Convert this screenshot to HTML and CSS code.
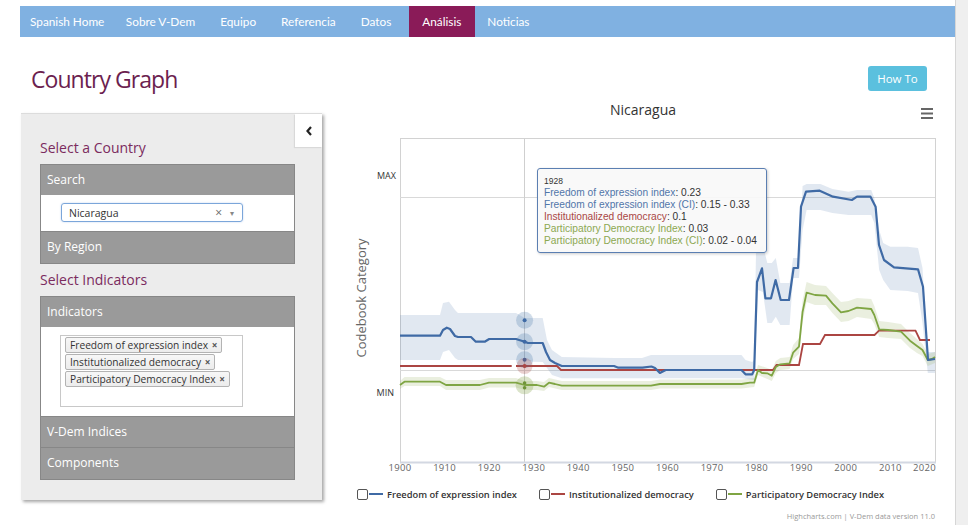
FILE: index.html
```html
<!DOCTYPE html>
<html lang="es">
<head>
<meta charset="utf-8">
<title>Country Graph</title>
<link rel="stylesheet" href="styles.css">
</head>
<body>
<div class="app">
  <div class="main">
    <nav class="topnav">
      <a class="nav-item first">Spanish Home</a>
      <a class="nav-item">Sobre V-Dem</a>
      <a class="nav-item">Equipo</a>
      <a class="nav-item">Referencia</a>
      <a class="nav-item">Datos</a>
      <a class="nav-item active">Análisis</a>
      <a class="nav-item">Noticias</a>
    </nav>
    <header class="title-row">
      <h1 class="page-title">Country Graph</h1>
      <button class="howto">How To</button>
    </header>
    <div class="content">
      <aside class="sidebar">
        <div class="collapse-tab">
          <svg width="8" height="10" viewBox="0 0 8 10"><path d="M6 1 L2.5 5 L6 9" fill="none" stroke="#222" stroke-width="2.2"/></svg>
        </div>
        <h3 class="side-heading">Select a Country</h3>
        <div class="acc">
          <div class="acc-head">Search</div>
          <div class="acc-body country-body">
            <div class="select-box">
              <span class="select-val">Nicaragua</span>
              <span class="select-clear">×</span>
              <span class="select-caret">▾</span>
            </div>
          </div>
          <div class="acc-head">By Region</div>
        </div>
        <h3 class="side-heading second">Select Indicators</h3>
        <div class="acc">
          <div class="acc-head">Indicators</div>
          <div class="acc-body ind-body">
            <div class="multi-box">
              <span class="tag">Freedom of expression index <b>×</b></span>
              <span class="tag">Institutionalized democracy <b>×</b></span>
              <span class="tag">Participatory Democracy Index <b>×</b></span>
            </div>
          </div>
          <div class="acc-head">V-Dem Indices</div>
          <div class="acc-head">Components</div>
        </div>
      </aside>
      <section class="chart">
        <svg class="plot" width="610" height="380" viewBox="340 97 610 380">
          <text class="ctitle" x="643" y="115" text-anchor="middle">Nicaragua</text>
          <g stroke="#666" stroke-width="2">
            <line x1="921" y1="109" x2="933" y2="109"/>
            <line x1="921" y1="113.5" x2="933" y2="113.5"/>
            <line x1="921" y1="118" x2="933" y2="118"/>
          </g>
          <rect x="400.5" y="138.5" width="535" height="324" fill="#fff" stroke="#d2d2d2"/>
          <line x1="400" y1="197.5" x2="935" y2="197.5" stroke="#d9d9d9"/>
          <line x1="400" y1="370.5" x2="935" y2="370.5" stroke="#d9d9d9"/>
          <line x1="524.5" y1="139" x2="524.5" y2="462" stroke="#cfcfcf"/>
          <line x1="400" y1="462.5" x2="936" y2="462.5" stroke="#d3d8e2" stroke-width="2"/>

          <polygon fill="#4572a7" fill-opacity="0.16" points="400,315 440,315 443,303 449,301.7 455,310 458,313 516,313 524.6,318 542.7,318 547,340 552,350 561.8,357 614,358 642,358 651,355 741.5,355 745.5,360 752.2,362 754.2,360 756,252 762.9,245 767.3,263 771.8,263 775.8,258 780.3,283 789.6,283 793.1,258 799,258 802.6,186 806.6,184 820.4,184 832.4,189 848.5,191.7 857,190 871.2,190 874.3,198 879.2,230 883.2,243 890.3,246.7 907.7,246.7 918,248 922.5,268 927.8,352 935,352 935,373 927.8,373 922.5,323 918,293 907.7,291 890.3,290 883.2,280 879.2,270 874.3,223 871.2,215 848.5,215 832.4,213 820.4,210 806.6,210 802.6,230 799,278 793.1,278 789.6,325 780.3,325 775.8,316.7 771.8,323 767.3,323 762.9,292 758,290 754.2,380 741.5,378.3 561.8,378.3 552,375 547,368 542.7,362 532,361.7 524.6,359.7 516,360 458,360 455,358 449,350 443,352 440,360 400,360"/>
          <polygon fill="#89a54e" fill-opacity="0.18" points="400,381 404.5,377 440,377 446,380 480,380 489,378 516,378 524.6,381 537,381 544,382 549,378 561.8,381 651,381 660,379.5 741.5,379.5 754.2,378 758,365 767.3,368 771.8,370 775.8,361 780.3,358 789.6,357 793.1,345 799,338 802.6,300 806.6,282 815,285 826,286 832.4,293 841,302 848.5,301 857,298 871.2,299 874.3,306 879.2,321 888,322 901,324 910,333 917,339 922.5,344 927.8,354 935,352 935,363 927.8,366 922.5,356 917,353 910,348 901,339 888,338 879.2,337 874.3,324 871.2,319 857,317 848.5,321 841,322 832.4,313 826,305 815,305 806.6,302 802.6,322 799,354 793.1,359 789.6,369 780.3,370 775.8,373 771.8,381 767.3,379 758,375 754.2,387 741.5,388.5 660,388.5 651,390 561.8,390 549,387 544,391 537,390 524.6,390 516,387.5 489,387.5 480,390 446,390 440,386 404.5,386 400,389"/>

          <polyline fill="none" stroke="#ab4542" stroke-width="1.8" points="400,366 511.7,366"/>
          <polyline fill="none" stroke="#ab4542" stroke-width="1.8" points="516,366 557,366 561,370 773,370 776.5,365 799,365 803,344 820,344 825,335 874.5,335 879,330.7 915.5,330.7 920,340 930,340"/>
          <polyline fill="none" stroke="#7fa543" stroke-width="1.8" stroke-linejoin="round" points="400,385 404.5,381.7 440,381.7 446,385 480,385 489,382.7 516,382.7 524.6,385 537,385 544,386.7 549,382.7 555,384 561.8,385.7 651,385.7 660,384 741.5,384 750,382.7 754.2,382.7 758,370 762,373 767.3,373.3 771.8,375.7 775.8,367 780.3,364.3 789.6,363.3 793.1,352.7 799,346.7 802.6,311.7 806.6,292.7 815,295 826,295.7 832.4,303.3 841,312.3 848.5,311 857,307.7 871.2,309 874.3,315 879.2,329.3 888,330 901,331.7 910,340.7 917,346 922.5,350 927.8,360 932,359 935,357"/>
          <polyline fill="none" stroke="#3f6aa5" stroke-width="2.2" stroke-linejoin="round" points="400,335.7 440,335.7 443,330 446.8,327.7 450,329 455,336 458,337 471,337 475.8,341.7 484.7,341.7 489.2,339 516,339 524.6,341.7 528,343 542.7,343 546,352 550,360 555,363 561.8,366 614,366 618.4,367.7 642.5,367.7 651.4,366.5 655,368 659.9,373 665.7,370 741.5,370 745.5,374.3 752.2,374.3 754.2,370 757,282 762,268.3 765.4,298.3 771,298.3 775.6,280 780.7,300 789,300 793.6,268 798,268 801,206.7 806,191.7 819.7,190.7 833,196.7 851.9,200 857,196.7 870.5,196.7 875.6,206.7 879,245 884,260 894,267.3 918,269.3 923,286.7 928,360 935,359"/>

          <g>
            <circle cx="524.6" cy="320.3" r="8.5" fill="#4572a7" fill-opacity="0.25"/>
            <circle cx="524.6" cy="320.3" r="2" fill="#3f6aa5"/>
            <circle cx="524.6" cy="341.7" r="8.5" fill="#4572a7" fill-opacity="0.25"/>
            <circle cx="524.6" cy="341.7" r="2" fill="#3f6aa5"/>
            <circle cx="524.6" cy="359.7" r="8.5" fill="#4572a7" fill-opacity="0.25"/>
            <circle cx="524.6" cy="359.7" r="2" fill="#3f6aa5"/>
            <circle cx="524.6" cy="366" r="8" fill="#aa4643" fill-opacity="0.25"/>
            <circle cx="524.6" cy="366" r="2" fill="#ab4542"/>
            <circle cx="524.6" cy="385.3" r="9" fill="#89a54e" fill-opacity="0.3"/>
            <circle cx="524.6" cy="383" r="1.8" fill="#6f9438"/>
            <circle cx="524.6" cy="387.7" r="1.8" fill="#6f9438"/>
          </g>

          <text class="ylab" x="396" y="179" text-anchor="end">MAX</text>
          <text class="ylab" x="394" y="396" text-anchor="end">MIN</text>
          <text class="ytitle" transform="translate(365.5 298) rotate(-90)" text-anchor="middle">Codebook Category</text>

          <g class="xlab" text-anchor="middle">
            <text x="400" y="470.5">1900</text>
            <text x="444.6" y="470.5">1910</text>
            <text x="489.2" y="470.5">1920</text>
            <text x="533.7" y="470.5">1930</text>
            <text x="578.3" y="470.5">1940</text>
            <text x="622.9" y="470.5">1950</text>
            <text x="667.5" y="470.5">1960</text>
            <text x="712.1" y="470.5">1970</text>
            <text x="756.6" y="470.5">1980</text>
            <text x="801.2" y="470.5">1990</text>
            <text x="845.8" y="470.5">2000</text>
            <text x="890.4" y="470.5">2010</text>
            <text x="936" y="470.5" text-anchor="end">2020</text>
          </g>
        </svg>

        <div class="tooltip">
          <div class="tt-date">1928</div>
          <div class="tt-line"><span class="c-blue">Freedom of expression index</span>: 0.23</div>
          <div class="tt-line"><span class="c-blue">Freedom of expression index (CI)</span>: 0.15 - 0.33</div>
          <div class="tt-line"><span class="c-red">Institutionalized democracy</span>: 0.1</div>
          <div class="tt-line"><span class="c-green">Participatory Democracy Index</span>: 0.03</div>
          <div class="tt-line"><span class="c-green">Participatory Democracy Index (CI)</span>: 0.02 - 0.04</div>
        </div>

        <div class="legend">
          <div class="leg-item"><span class="leg-box"></span><span class="leg-line blue"></span><span class="leg-text">Freedom of expression index</span></div>
          <div class="leg-item"><span class="leg-box"></span><span class="leg-line red"></span><span class="leg-text">Institutionalized democracy</span></div>
          <div class="leg-item"><span class="leg-box"></span><span class="leg-line green"></span><span class="leg-text">Participatory Democracy Index</span></div>
        </div>
        <div class="credits">Highcharts.com | V-Dem data version 11.0</div>
      </section>
    </div>
  </div>
  <div class="scrollbar"></div>
</div>
</body>
</html>
```

FILE: styles.css
```css
* { box-sizing: border-box; }
html, body { margin: 0; padding: 0; }
body {
  width: 968px;
  height: 525px;
  overflow: hidden;
  background: #fff;
  font-family: "Open Sans", "Noto Sans", sans-serif;
  color: #333;
}
.app { display: flex; height: 525px; }
.main { width: 955px; flex: none; }
.scrollbar {
  width: 13px;
  flex: none;
  background: #efefef;
  border-left: 1px solid #d6d6d6;
}

/* nav */
.topnav {
  display: flex;
  margin: 6px 0 0 20px;
  width: 935px;
  height: 31px;
  background: #80b1e1;
}
.nav-item {
  display: flex;
  align-items: center;
  padding: 0 12.5px;
  color: #fff;
  font-family: Lato, "Open Sans", sans-serif;
  font-size: 11.8px;
  white-space: nowrap;
}
.nav-item.first { padding-left: 10px; padding-right: 9px; }
.nav-item.active { background: #8a1b58; padding: 0 13.5px; margin-left: 5px; }

/* title */
.title-row {
  display: flex;
  justify-content: space-between;
  align-items: flex-start;
  height: 60px;
}
.page-title {
  margin: 27px 0 0 31px;
  font-size: 23px;
  line-height: 30px;
  font-weight: 400;
  letter-spacing: -0.95px;
  color: #6c1f4f;
}
.howto {
  margin: 29px 28px 0 0;
  width: 59px;
  height: 25px;
  border: 0;
  border-radius: 3px;
  background: #5bc0de;
  color: #fff;
  font-family: "Open Sans", sans-serif;
  font-size: 11.5px;
  padding: 0;
}

/* content */
.content { display: flex; align-items: flex-start; }
.sidebar {
  position: relative;
  margin: 16px 0 0 21px;
  width: 301px;
  height: 387px;
  background: #ececec;
  padding: 24px 27px 0 19px;
  box-shadow: 2px 2px 3px rgba(0,0,0,0.35);
  border-top: 1px solid #dcdcdc;
}
.collapse-tab {
  position: absolute;
  right: 0;
  top: 0;
  width: 27px;
  height: 33px;
  background: #fff;
  display: flex;
  align-items: center;
  justify-content: center;
  box-shadow: -1px 1px 1px rgba(0,0,0,0.08);
}
.side-heading {
  margin: 0 0 6px 0;
  font-size: 14px;
  line-height: 20px;
  font-weight: 400;
  color: #7b2b5e;
}
.side-heading.second { margin: 6px 0 6px 0; }
.acc { border: 1px solid #878787; border-top: 0; }
.acc-head {
  height: 31px;
  background: #9a9a9a;
  border-top: 1px solid #878787;
  color: #fff;
  font-size: 12px;
  line-height: 29px;
  padding-left: 6px;
}
.acc-head:last-child { height: 32px; }
.acc-body { background: #fff; }
.country-body { height: 36px; padding: 8px 0 0 20px; }
.select-box {
  display: flex;
  align-items: center;
  width: 182px;
  height: 19px;
  border: 1px solid #7ba6da;
  border-radius: 3px;
  box-shadow: 0 0 2px rgba(100,150,220,0.4);
  padding: 0 0 0 7px;
  font-size: 10.5px;
  color: #333;
}
.select-val { flex: 1; }
.select-clear { color: #666; font-size: 12px; margin-right: 8px; }
.select-caret { color: #888; font-size: 8px; margin-right: 8px; }
.ind-body { height: 89px; padding: 8px 0 0 19px; }
.multi-box {
  width: 183px;
  height: 72px;
  border: 1px solid #c8c8c8;
  padding: 1px 0 0 4px;
  display: flex;
  flex-direction: column;
  align-items: flex-start;
  gap: 1px;
}
.tag {
  display: inline-block;
  height: 16px;
  line-height: 14px;
  padding: 0 4px;
  border: 1px solid #b3b3b3;
  border-radius: 2px;
  background: linear-gradient(#f7f7f7, #ececec);
  font-size: 10.2px;
  color: #333;
  white-space: nowrap;
}
.tag b { color: #555; font-size: 10px; margin-left: 1px; }

/* chart */
.chart {
  position: relative;
  margin-left: 18px;
  width: 610px;
}
.plot { display: block; font-family: "Open Sans", sans-serif; }
.ctitle { font-size: 14px; fill: #333; }
.ylab { font-size: 9px; fill: #333; }
.ytitle { font-size: 13px; fill: #666; }
.xlab text { font-size: 9.5px; fill: #666; letter-spacing: 0.3px; }
.tooltip {
  position: absolute;
  left: 197px;
  top: 71px;
  width: 230px;
  height: 85px;
  background: rgba(249,249,249,0.92);
  border: 1px solid #5b7fb2;
  border-radius: 3px;
  box-shadow: 1px 1px 3px rgba(0,0,0,0.2);
  padding: 6px 6px;
  font-family: "Liberation Sans", Arial, sans-serif;
  font-size: 10.2px;
  color: #333;
  white-space: nowrap;
}
.tt-date { font-size: 8.5px; line-height: 12px; }
.tt-line { line-height: 12px; }
.c-blue { color: #5176a9; }
.c-red { color: #a94745; }
.c-green { color: #8ca851; }

.legend {
  display: flex;
  gap: 22px;
  padding-left: 17px;
  margin-top: 9px;
  height: 16px;
  align-items: center;
}
.leg-item { display: flex; align-items: center; }
.leg-box {
  width: 11px;
  height: 11px;
  border: 1px solid #555;
  border-radius: 2px;
  background: #fff;
}
.leg-line { width: 14px; height: 2px; margin: 0 4px 0 1px; }
.leg-line.blue { background: #3f6aa5; }
.leg-line.red { background: #ab4542; }
.leg-line.green { background: #7fa543; }
.leg-text { font-size: 9.3px; font-weight: 600; color: #333; white-space: nowrap; }
.credits {
  margin-top: 9px;
  text-align: right;
  padding-right: 15px;
  font-size: 7.5px;
  color: #999;
}
```
